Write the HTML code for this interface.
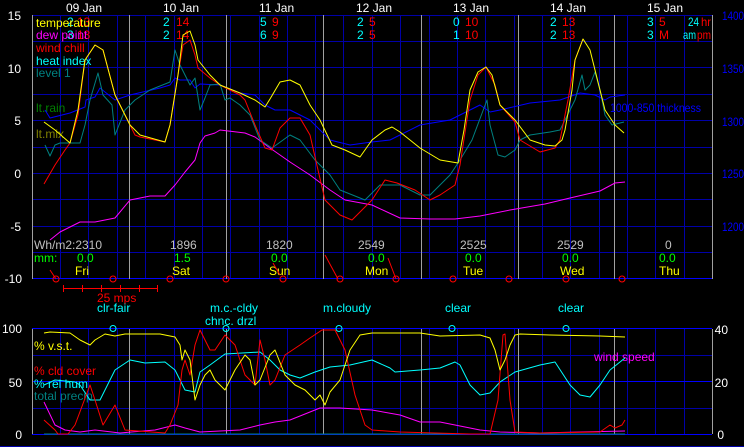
<!DOCTYPE html>
<html><head><meta charset="utf-8"><style>
html,body{margin:0;padding:0;background:#000;width:744px;height:447px;overflow:hidden}
svg{display:block}
text{font-family:"Liberation Sans",sans-serif;font-size:12px}
</style></head><body>
<svg width="744" height="447" viewBox="0 0 744 447" xmlns="http://www.w3.org/2000/svg">
<rect width="744" height="447" fill="#000"/>
<g stroke="#0000a8" stroke-width="1" shape-rendering="crispEdges">
<path d="M32 15.5H712M32 41.5H712M32 67.5H712M32 94.5H712M32 120.5H712M32 147.5H712M32 173.5H712M32 199.5H712M32 226.5H712M32 252.5H712"/>
<path d="M60.5 15V279M88.5 15V279M117.5 15V279M145.5 15V279M174.5 15V279M202.5 15V279M230.5 15V279M259.5 15V279M287.5 15V279M315.5 15V279M343.5 15V279M372.5 15V279M400.5 15V279M429.5 15V279M457.5 15V279M485.5 15V279M514.5 15V279M542.5 15V279M570.5 15V279M599.5 15V279M627.5 15V279M655.5 15V279M684.5 15V279"/>
<path d="M32 355.5H712M32 408.5H712"/>
<path d="M60.5 329V434M88.5 329V434M117.5 329V434M145.5 329V434M174.5 329V434M202.5 329V434M230.5 329V434M259.5 329V434M287.5 329V434M315.5 329V434M343.5 329V434M372.5 329V434M400.5 329V434M429.5 329V434M457.5 329V434M485.5 329V434M514.5 329V434M542.5 329V434M570.5 329V434M599.5 329V434M627.5 329V434M655.5 329V434M684.5 329V434"/>
<path d="M0 446.5H744"/>
</g>
<g stroke="#0000ff" stroke-width="1" shape-rendering="crispEdges">
<path d="M32 278.5H712M32 328.5H712M32 381.5H712M32 434.5H712"/>
</g>
<g stroke="#a0a0a0" stroke-width="1" shape-rendering="crispEdges">
<path d="M32.5 15V279M129.5 15V279M226.5 15V279M323.5 15V279M421.5 15V279M518.5 15V279M614.5 15V279M712.5 15V279"/>
<path d="M32.5 329V434M129.5 329V434M226.5 329V434M323.5 329V434M421.5 329V434M518.5 329V434M614.5 329V434M712.5 329V434"/>
</g>
<g fill="#fff" text-anchor="end">
<text x="21" y="20" font-size="13">15</text><text x="21" y="73" font-size="13">10</text><text x="21" y="125" font-size="13">5</text><text x="21" y="178" font-size="13">0</text><text x="21" y="231" font-size="13">-5</text><text x="22" y="283" font-size="13">-10</text>
<text x="22" y="333" font-size="13">100</text><text x="22" y="387" font-size="13">50</text><text x="22" y="439" font-size="13">0</text>
<text x="728" y="334" font-size="13">40</text><text x="728" y="387" font-size="13">20</text><text x="724" y="439" font-size="13">0</text>
</g>
<g fill="#0000ff" font-size="13">
<text x="722" y="20" font-size="13" textLength="22" lengthAdjust="spacingAndGlyphs">1400</text><text x="722" y="73" font-size="13" textLength="22" lengthAdjust="spacingAndGlyphs">1350</text><text x="722" y="126" font-size="13" textLength="22" lengthAdjust="spacingAndGlyphs">1300</text><text x="722" y="178" font-size="13" textLength="22" lengthAdjust="spacingAndGlyphs">1250</text><text x="722" y="231" font-size="13" textLength="22" lengthAdjust="spacingAndGlyphs">1200</text>
<text x="610" y="112" font-size="12" textLength="91" lengthAdjust="spacingAndGlyphs">1000-850 thickness</text>
</g>
<g fill="#fff">
<text x="66" y="12" font-size="13">09 Jan</text><text x="163" y="12" font-size="13">10 Jan</text><text x="259" y="12" font-size="13">11 Jan</text><text x="356" y="12" font-size="13">12 Jan</text><text x="453" y="12" font-size="13">13 Jan</text><text x="550" y="12" font-size="13">14 Jan</text><text x="647" y="12" font-size="13">15 Jan</text>
</g>
<g font-size="12">
<g fill="#00ffff"><text x="67" y="26">2</text><text x="67" y="39">3</text><text x="163" y="26">2</text><text x="163" y="39">2</text><text x="260" y="26">5</text><text x="260" y="39">6</text><text x="357" y="26">2</text><text x="357" y="39">2</text><text x="453" y="26">0</text><text x="453" y="39">1</text><text x="550" y="26">2</text><text x="550" y="39">2</text><text x="647" y="26">3</text><text x="647" y="39">3</text><text x="688" y="26" textLength="11" lengthAdjust="spacingAndGlyphs">24</text><text x="683" y="39" textLength="13" lengthAdjust="spacingAndGlyphs">am</text></g>
<g fill="#ff0000"><text x="77" y="26">13</text><text x="77" y="39">13</text><text x="176" y="26">14</text><text x="176" y="39">14</text><text x="272" y="26">9</text><text x="272" y="39">9</text><text x="369" y="26">5</text><text x="369" y="39">5</text><text x="465" y="26">10</text><text x="465" y="39">10</text><text x="562" y="26">13</text><text x="562" y="39">13</text><text x="659" y="26">5</text><text x="659" y="39">M</text><text x="701" y="26" textLength="10" lengthAdjust="spacingAndGlyphs">hr</text><text x="697" y="39" textLength="14" lengthAdjust="spacingAndGlyphs">pm</text></g>
</g>
<g font-size="12">
<text x="36" y="27" fill="#ffff00">temperature</text>
<text x="36" y="39" fill="#ff00ff">dew point</text>
<text x="36" y="52" fill="#ff0000">wind chill</text>
<text x="36" y="65" fill="#00ffff">heat index</text>
<text x="36" y="77" fill="#008080">level 1</text>
<text x="36" y="112" fill="#008000">lt.rain</text>
<text x="36" y="138" fill="#808000">lt.mix</text>
</g>
<g fill="none" stroke-width="1" stroke-linejoin="round">
<polyline stroke="#0000ff" points="45,110 50,118 70,113 85,107 86,100 95,97 100,88 115,100 130,95 160,88 170,85 175,78 180,80 190,80 195,88 200,84 220,85 240,93 255,95 265,105 275,110 290,110 310,120 330,140 350,145 372,142 390,140 420,125 450,120 480,105 490,112 500,110 530,103 560,100 580,93 595,95 605,100 610,97 625,95"/>
<polyline stroke="#ff00ff" points="50,240 60,232 80,222 95,222 115,218 130,200 150,196 165,196 175,185 185,172 195,160 200,143 205,136 215,133 220,130 245,133 255,137 270,148 290,162 310,175 330,190 345,200 372,205 400,218 430,219 455,219 480,216 510,210 545,204 570,198 600,191 615,183 625,182"/>
<polyline stroke="#008080" points="45,145 50,156 55,145 60,143 80,143 85,125 90,100 98,73 103,95 112,105 115,135 125,110 135,100 150,90 170,82 175,50 180,65 190,85 195,78 200,110 205,98 210,85 220,84 225,100 230,98 240,105 250,115 260,140 272,148 290,135 300,140 315,160 330,175 340,190 365,200 380,185 400,185 420,195 430,195 450,175 460,160 472,140 487,100 490,125 498,155 505,157 515,150 520,140 530,135 550,132 560,130 565,120 575,100 582,75 585,90 590,85 595,72 600,90 605,115 612,125 624,122"/>
<polyline stroke="#ff0000" points="44,184 55,165 65,150 70,143 78,115 85,60 95,45 103,50 115,95 130,125 135,135 140,137 165,142 170,125 178,75 183,45 190,40 195,55 198,68 210,78 220,85 240,95 245,100 255,125 265,148 272,150 280,128 290,118 300,118 310,135 318,170 325,200 340,215 352,220 362,210 372,200 385,180 397,183 415,190 430,200 440,195 455,185 460,165 470,100 478,75 486,67 495,85 500,105 515,122 520,140 540,152 555,148 560,140 568,100 575,60 583,39"/>
<polyline stroke="#ffff00" points="44,122 55,130 70,143 78,110 85,60 95,45 103,50 115,95 130,125 140,135 165,142 170,125 178,75 183,35 190,31 195,45 198,60 210,75 220,85 240,93 255,100 265,107 270,99 280,82 290,80 300,85 310,105 320,120 332,145 345,150 360,157 372,140 385,130 392,127 400,132 420,148 440,160 458,163 464,130 470,90 478,72 486,67 492,75 500,105 515,120 530,140 545,145 555,146 562,140 565,130 572,90 575,60 583,39 590,50 595,70 605,110 615,125 624,133"/>
</g>
<g fill="#c0c0c0" font-size="12">
<text x="34" y="249">Wh/m2:2310</text><text x="170" y="249">1896</text><text x="266" y="249">1820</text><text x="358" y="249">2549</text><text x="460" y="249">2525</text><text x="557" y="249">2529</text><text x="665" y="249">0</text>
</g>
<g fill="#00ff00" font-size="12">
<text x="34" y="262">mm:</text><text x="77" y="262">0.0</text><text x="174" y="262">1.5</text><text x="271" y="262">0.0</text><text x="368" y="262">0.0</text><text x="465" y="262">0.0</text><text x="562" y="262">0.0</text><text x="659" y="262">0.0</text>
</g>
<g fill="#ffff00" font-size="12">
<text x="75" y="275">Fri</text><text x="172" y="275">Sat</text><text x="269" y="275">Sun</text><text x="365" y="275">Mon</text><text x="463" y="275">Tue</text><text x="560" y="275">Wed</text><text x="659" y="275">Thu</text>
</g>
<g stroke="#ff0000" fill="none" stroke-width="1">
<path d="M50 270L56 279M273 263L280 275M325 255L338 279M388 258L396 279"/>
<circle cx="56" cy="279" r="3"/><circle cx="113" cy="279" r="3"/><circle cx="170" cy="279" r="3"/><circle cx="226" cy="279" r="3"/><circle cx="283" cy="279" r="3"/><circle cx="340" cy="279" r="3"/><circle cx="396" cy="279" r="3"/><circle cx="453" cy="279" r="3"/><circle cx="509" cy="279" r="3"/><circle cx="566" cy="279" r="3"/><circle cx="622" cy="279" r="3"/>
<path d="M63 288.5H157M63.5 285V292M82.5 285V292M101.5 285V292M120.5 285V292M139.5 285V292M157.5 285V292" shape-rendering="crispEdges"/>
</g>
<text x="97" y="302" fill="#ff0000" font-size="12">25 mps</text>
<g fill="#00ffff" font-size="12">
<text x="97" y="312">clr-fair</text><text x="210" y="312">m.c.-cldy</text><text x="205" y="325">chnc. drzl</text><text x="323" y="312">m.cloudy</text><text x="445" y="312">clear</text><text x="558" y="312">clear</text>
</g>
<g stroke="#00ffff" fill="none"><circle cx="113" cy="328.5" r="3"/><circle cx="226" cy="328.5" r="3"/><circle cx="339" cy="328.5" r="3"/><circle cx="452" cy="328.5" r="3"/><circle cx="566" cy="328.5" r="3"/></g>
<g font-size="12">
<text x="34" y="350" fill="#ffff00">% v.s.t.</text>
<text x="34" y="375" fill="#ff0000">% cld cover</text>
<text x="34" y="388" fill="#00ffff">% rel hum</text>
<text x="34" y="400" fill="#008080">total precip</text>
<text x="594" y="361" fill="#ff00ff">wind speed</text>
</g>
<g fill="none" stroke-width="1" stroke-linejoin="round">
<polyline stroke="#008080" points="44,434 625,434"/>
<polyline stroke="#ff00ff" points="44,402 55,425 65,430 80,432 95,430 120,433 155,430 175,425 185,428 200,432 240,430 260,425 275,422 290,420 320,408 340,408 372,410 400,415 420,422 440,422 460,426 480,430 500,432 540,433 580,432 625,431"/>
<polyline stroke="#00ffff" points="44,385 55,380 75,382 80,385 90,400 100,400 115,370 130,360 145,363 165,362 175,370 185,390 195,392 200,372 210,365 225,354 260,352 270,360 280,370 290,375 300,378 315,372 330,367 350,365 372,360 390,368 395,372 420,370 440,368 455,362 460,365 470,385 480,395 490,393 500,382 515,372 540,365 555,362 570,385 580,395 590,397 600,385 610,370 625,358"/>
<polyline stroke="#ff0000" points="44,420 55,430 58,434 68,434 75,425 90,385 95,400 103,425 115,405 125,430 165,433 170,425 178,405 182,370 185,360 190,375 195,345 200,330 210,350 215,350 225,335 235,345 245,375 255,385 260,340 265,360 270,385 275,380 285,355 300,345 310,338 322,330 335,330 345,350 355,395 365,425 372,430 400,432 470,434 490,434 498,400 503,335 505,334 510,400 515,432 540,433 600,432 610,425 615,428 622,425 625,420"/>
<polyline stroke="#ffff00" points="44,333 50,332 70,333 80,340 90,345 95,340 105,334 115,336 125,334 160,334 175,337 180,345 182,360 185,350 190,360 195,400 200,385 205,375 210,370 215,380 225,390 235,370 245,355 250,360 255,385 260,380 270,355 275,350 285,375 295,385 305,390 315,400 320,395 325,405 330,392 340,380 350,350 360,335 372,333 420,333 440,336 480,335 490,338 495,350 500,370 505,360 510,345 515,335 520,334 550,335 600,336 625,337"/>
</g>
</svg>
</body></html>
